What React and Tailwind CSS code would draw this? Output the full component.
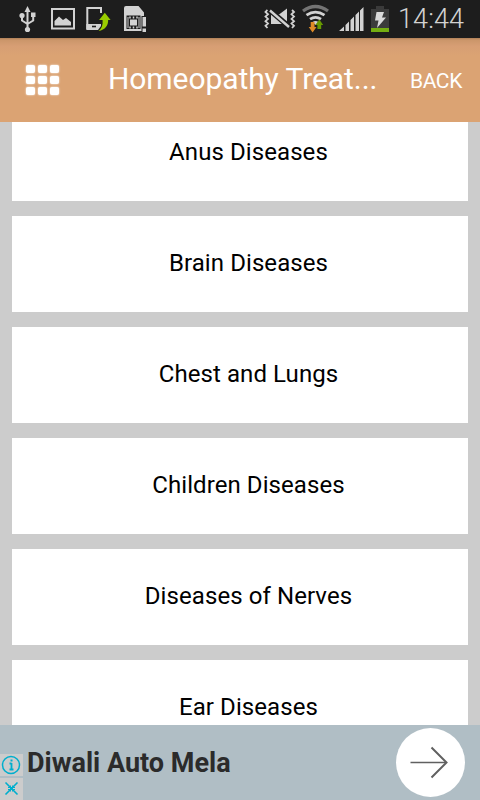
import React from "react";

const diseases = [
  "Anus Diseases",
  "Brain Diseases",
  "Chest and Lungs",
  "Children Diseases",
  "Diseases of Nerves",
  "Ear Diseases",
];

const UsbIcon = () => (
  <svg width="18" height="38" viewBox="19 0 18 38" fill="#d2d2d2">
    <path d="M27.5 6l3 6h-6z" />
    <circle cx="27.5" cy="29.5" r="2.6" />
    <circle cx="22" cy="15.5" r="2.6" />
    <path d="M31 12.5h4.5V17H31z" />
    <path d="M27.5 11v18M22 16v4.5l5.5 3.5M33.2 16v4.5L27.5 24" fill="none" stroke="#d2d2d2" strokeWidth="2" />
  </svg>
);

const PictureIcon = () => (
  <svg width="24" height="38" viewBox="51 0 24 38">
    <path d="M52 9h22v19.5H52z" fill="none" stroke="#d2d2d2" strokeWidth="2" />
    <path d="M54.5 25.5V21l4.5-4.500 4 3.500 3-2 5 4v3.500z" fill="#d2d2d2" />
  </svg>
);

const PhoneIcon = () => (
  <svg width="26" height="38" viewBox="86 0 26 38">
    <path d="M101 13V8H87.3v21" fill="none" stroke="#d2d2d2" strokeWidth="2" />
    <path d="M86.3 24H101v2l-3 4H86.3z" fill="#d2d2d2" />
    <path d="M92 25.7h4v1.6h-4z" fill="#1d1d1d" />
    <path d="M104.8 12.8l5.8 7.2h-2.5c.4 5-3 10-9.5 11 3-2.500 4.500-6 4-11h-3.500z" fill="#99cc00" />
  </svg>
);

const SimIcon = () => (
  <svg width="23" height="38" viewBox="124 0 23 38">
    <path d="M126 6h12.5l5.500 6.500V16h-2.500v15H124V8q0-2 2-2z" fill="#d2d2d2" />
    <path d="M126.500 15.500h14V29h-14z" fill="#1d1d1d" />
    <path d="M130 19.500h7v6h-7z" fill="#d2d2d2" />
    <path d="M130 16.500v2M133.500 16.500v2M137 16.500v2M130 26.500v2M133.500 26.500v2M137 26.500v2" stroke="#d2d2d2" strokeWidth="1.500" />
    <path d="M128 17v11M139 17v11" stroke="#d2d2d2" strokeWidth="1" />
    <path d="M142.500 17h3.500v9.500h-3.500zM142.500 28.500h3.500V32h-3.500z" fill="#d2d2d2" />
  </svg>
);

const MuteIcon = () => (
  <svg width="32" height="38" viewBox="264 0 32 38">
    <path d="M267.5 10l-2 2 2.5 2.3-2.5 2.3 2.5 2.3-2.5 2.3 2.5 2.3-2.5 2.3 2 2.2M292 10l2 2-2.5 2.3 2.5 2.3-2.5 2.3 2.5 2.3-2.5 2.3 2.5 2.3-2 2.2" fill="none" stroke="#d2d2d2" strokeWidth="1.8" />
    <path d="M271 14.500h8l8-6v15.500h-16z" fill="#d2d2d2" />
    <path d="M269 9.500l21 18" stroke="#1d1d1d" strokeWidth="5.500" />
    <path d="M270 10.500l19 16.500" stroke="#d2d2d2" strokeWidth="2.400" />
  </svg>
);

const WifiIcon = () => (
  <svg width="27" height="38" viewBox="302 0 27 38">
    <path d="M303 11q12.5-9 25 0" fill="none" stroke="#747474" strokeWidth="3.3" />
    <path d="M306.5 15.2q9-6.2 18 0M310 19.2q5.5-3.7 11 0" fill="none" stroke="#d2d2d2" strokeWidth="2.8" />
    <path d="M312.5 22q3-2 6 0l-3 3z" fill="#d2d2d2" />
    <path d="M310.7 22h3.8v5h2l-3.9 5.5-3.900-5.500h2z" fill="#df8b26" />
    <path d="M319.3 19.500l3.900 5.500h-2v4h-3.800v-4h-2z" fill="#669900" />
  </svg>
);

const SignalIcon = () => (
  <svg width="25" height="38" viewBox="339 0 25 38">
    <path d="M339 31l5-4.500V31zM345.500 31v-6l3.500-3.500V31zM350.500 31V20l3.500-3.500V31zM355.500 31V15l3.500-3.500V31zM360 31V10.500l3.500-3.500v24z" fill="#d2d2d2" />
  </svg>
);

const BatteryIcon = () => (
  <svg width="18" height="38" viewBox="371 0 18 38">
    <path d="M376 6h8v3h5v19h-18V9h5z" fill="#3b3b3b" />
    <path d="M371 28h18v4h-18z" fill="#74ad12" />
    <path d="M376.500 12h7.500l-2 5.500h4L377 28l1.500-7.500H375z" fill="#dadada" />
  </svg>
);

const StatusBar = () => (
  <div className="flex h-[38px] shrink-0 bg-[#1d1d1d] pl-[19px]">
    <UsbIcon />
    <div className="ml-[14px]"><PictureIcon /></div>
    <div className="ml-[11px]"><PhoneIcon /></div>
    <div className="ml-3"><SimIcon /></div>
    <div className="ml-[117px]"><MuteIcon /></div>
    <div className="ml-[6px]"><WifiIcon /></div>
    <div className="ml-[10px]"><SignalIcon /></div>
    <div className="ml-[7px]"><BatteryIcon /></div>
    <span className="ml-[9px] whitespace-nowrap text-[27px] font-light leading-[39px] tracking-[0.1px] text-[#d2d2d2]">14:44</span>
  </div>
);

const Header = () => (
  <div className="flex h-[84px] shrink-0 bg-[#dba373] bg-[linear-gradient(#b08058_0px,#cb966a_2px,#d79e74_8px,#dba373_18px)] text-white">
    <div className="ml-[26px] mt-[27px] grid h-[30px] w-[33px] shrink-0 grid-cols-3 gap-[3px]">
      {Array.from({ length: 9 }).map((_, i) => (
        <span key={i} className="rounded-[2px] bg-white shadow-[0_0_2px_#ffffff]" />
      ))}
    </div>
    <h1 className="ml-[49px] w-[272px] shrink-0 whitespace-nowrap text-[30px] leading-[82px] tracking-[-0.08px]">Homeopathy Treat...</h1>
    <button className="ml-[30px] h-[84px] whitespace-nowrap text-[21px] leading-[84px] tracking-[-0.4px]">
      <span className="block pt-px">BACK</span>
    </button>
  </div>
);

const AdBanner = () => (
  <div className="flex h-[75px] shrink-0 bg-[#b0bec5]">
    <div className="mt-[29px] w-[23px] shrink-0">
      <div className="h-[22px] bg-[#cccccc]">
        <svg width="23" height="22" fill="none" stroke="#00aecd">
          <circle cx="11" cy="11" r="8.5" strokeWidth="1.5" />
          <path d="M11.5 9v6M9.5 9.500h2M9.500 15.500h4" strokeWidth="1.800" />
          <path d="M10.500 6.500h2" strokeWidth="2" />
        </svg>
      </div>
      <div className="mt-[2px] h-[22px] bg-[#cccccc]">
        <svg width="23" height="22" fill="none" stroke="#00aecd">
          <path d="M5.500 4.500l12 12M17.500 4.500l-12 12" strokeWidth="1.600" />
          <path d="M8 9.500h7M8 11.500h7M10.500 7.500v6M12.500 7.500v6" strokeWidth="1" />
        </svg>
      </div>
    </div>
    <span className="ml-1 whitespace-nowrap text-[27px] font-bold leading-[77px] text-[#2b2b2b]">Diwali Auto Mela</span>
    <div className="ml-auto mr-[15px] mt-[3px] h-[69px] w-[69px] shrink-0 rounded-full bg-white">
      <svg width="69" height="69" fill="none" stroke="#606060">
        <path d="M14.500 34.500h35" strokeWidth="1.500" />
        <path d="M35.500 19.500l15 15-15 15" strokeWidth="2" />
      </svg>
    </div>
  </div>
);

const App = () => (
  <div className="flex h-[800px] w-[480px] flex-col overflow-hidden bg-[#cccccc] font-['Roboto',sans-serif]">
    <StatusBar />
    <Header />
    <div className="min-h-0 flex-1 overflow-hidden px-3">
      <div className="-mt-[17px] flex flex-col gap-[15px]">
        {diseases.map((name) => (
          <div key={name} className="flex h-24 shrink-0 items-center justify-center bg-white pb-[2px] pl-[17px] text-2xl tracking-[0.08px] text-black">
            {name}
          </div>
        ))}
      </div>
    </div>
    <AdBanner />
  </div>
);

export default App;
